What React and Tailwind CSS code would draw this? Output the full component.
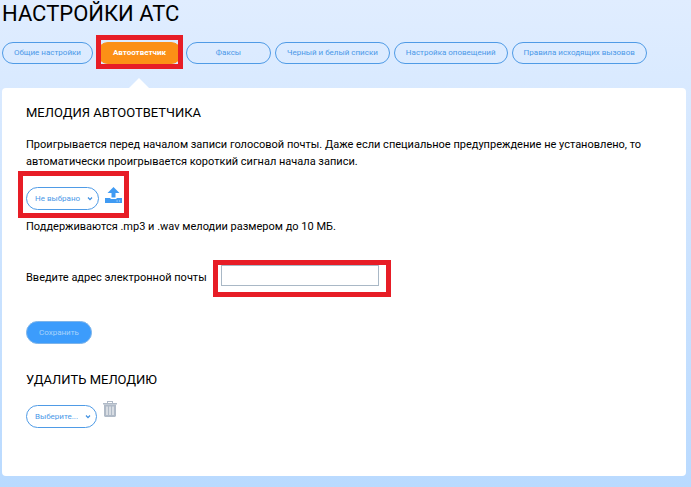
import { useState } from "react";

const tabs = [
    "Общие настройки",
    "Автоответчик",
    "Факсы",
    "Черный и белый списки",
    "Настройка оповещений",
    "Правила исходящих вызовов",
];

function Highlight({ className }) {
    return <span className={`absolute border-5 border-[#e71d26] pointer-events-none ${className}`}></span>;
}

function Tab({ label, active, onClick }) {
    return (
        <div className="relative min-w-[85px]">
            <button
                type="button"
                onClick={onClick}
                className={`block w-full h-[22px] px-[11px] rounded-full border text-[8px] leading-3 whitespace-nowrap ${
                    active ? "bg-[#fc9016] border-[#fc9016] text-white font-bold" : "border-[#4f9be6] text-[#4a98e8]"
                }`}
            >
                {label}
            </button>
            {active && (
                <>
                    <svg className="absolute left-1/2 top-9 -translate-x-1/2 w-5 h-[10px]" viewBox="0 0 20 10">
                        <path d="M10 0L20 10H0Z" fill="#fff" />
                    </svg>
                    <Highlight className="-top-[7px] -bottom-[5px] -left-px -right-px" />
                </>
            )}
        </div>
    );
}

function PillSelect({ label, option, className }) {
    return (
        <div className="relative">
            <select
                aria-label={label}
                className={`block appearance-none h-[23px] pl-2 pr-3 rounded-full border border-[#4f9be6] bg-white text-[#4a98e8] text-[8px] leading-3 ${className}`}
            >
                <option>{option}</option>
            </select>
            <svg className="absolute right-1.5 top-[9px] w-[6px] h-[6px] pointer-events-none" viewBox="0 0 6 6">
                <path d="M1 1.5L3 3.7L5 1.5" fill="none" stroke="#3f8fe0" strokeWidth="1.2" />
            </svg>
        </div>
    );
}

function UploadIcon() {
    return (
        <svg className="block w-[17px] h-4" viewBox="0 0 17 16" fill="#409bf3">
            <path d="M8.500 0L14.500 6H10.500V10.500H6.500V6H2.500Z" />
            <path d="M0 11H5.500V12H11.500V11H17V16H0Z" />
            <path d="M11.500 13.500h1.200v1h-1.200zM14 13.500h1.200v1H14z" fill="#b9dcfb" />
        </svg>
    );
}

function TrashIcon() {
    return (
        <svg className="block w-[14px] h-4" viewBox="0 0 14 16" fill="#b0bac7">
            <path d="M4 0H10V2H14V3.500H0V2H4ZM5 1V2H9V1Z" fillRule="evenodd" />
            <path d="M1 3.500H13V15L12 16H2L1 15ZM3.500 5.500V14H4.500V5.500ZM6.500 5.500V14H7.500V5.500ZM9.500 5.500V14H10.500V5.500Z" fillRule="evenodd" />
        </svg>
    );
}

export default function App() {
    const [current, setCurrent] = useState(1);

    return (
        <div className="min-h-screen bg-linear-to-b from-[#e0edff] to-[#b9daff] pl-0.5 pr-[5px] pb-3 font-[Roboto,sans-serif] text-black">
            <h1 className="text-[22px] leading-7">НАСТРОЙКИ АТС</h1>

            <nav className="mt-[14px] flex flex-wrap gap-1">
                {tabs.map((label, i) => (
                    <Tab key={label} label={label} active={i === current} onClick={() => setCurrent(i)} />
                ))}
            </nav>

            <main className="mt-6 rounded-sm bg-white px-6 pt-4 pb-12">
                <h2 className="text-[13px] leading-[18px]">МЕЛОДИЯ АВТООТВЕТЧИКА</h2>
                <p className="mt-[14px] text-[11px] leading-[17px]">
                    Проигрывается перед началом записи голосовой почты. Даже если специальное предупреждение не
                    установлено, то автоматически проигрывается короткий сигнал начала записи.
                </p>

                <div className="relative mt-[17px] w-fit flex items-start gap-1.5">
                    <PillSelect label="Мелодия" option="Не выбрано" className="w-[73px]" />
                    <button type="button" aria-label="Загрузить мелодию">
                        <UploadIcon />
                    </button>
                    <Highlight className="-top-4 -bottom-2 -left-2 -right-[7px]" />
                </div>
                <p className="mt-2 text-[11px] leading-[17px]">
                    Поддерживаются .mp3 и .wav мелодии размером до 10 МБ.
                </p>

                <div className="mt-[30px] flex items-end">
                    <label htmlFor="email" className="w-[195px] text-[11px] leading-[17px]">
                        Введите адрес электронной почты
                    </label>
                    <div className="relative">
                        <input
                            id="email"
                            type="email"
                            className="block w-[158px] h-[21px] px-1 border border-[#a9b8c6] bg-white text-[11px]"
                        />
                        <Highlight className="-top-[5px] -bottom-[11px] -left-2 -right-3" />
                    </div>
                </div>

                <button
                    type="button"
                    className="mt-[35px] block h-[23px] px-3 rounded-full border border-[#7db4ea] bg-[#3c9cfc] text-[#a9d3fb] text-[8px] leading-3"
                >
                    Сохранить
                </button>

                <h2 className="mt-[27px] text-[13px] leading-[18px]">УДАЛИТЬ МЕЛОДИЮ</h2>
                <div className="mt-3 flex items-start gap-1.5">
                    <div className="pt-1">
                        <PillSelect label="Удалить мелодию" option="Выберите..." className="w-[71px]" />
                    </div>
                    <button type="button" aria-label="Удалить">
                        <TrashIcon />
                    </button>
                </div>
            </main>
        </div>
    );
}
